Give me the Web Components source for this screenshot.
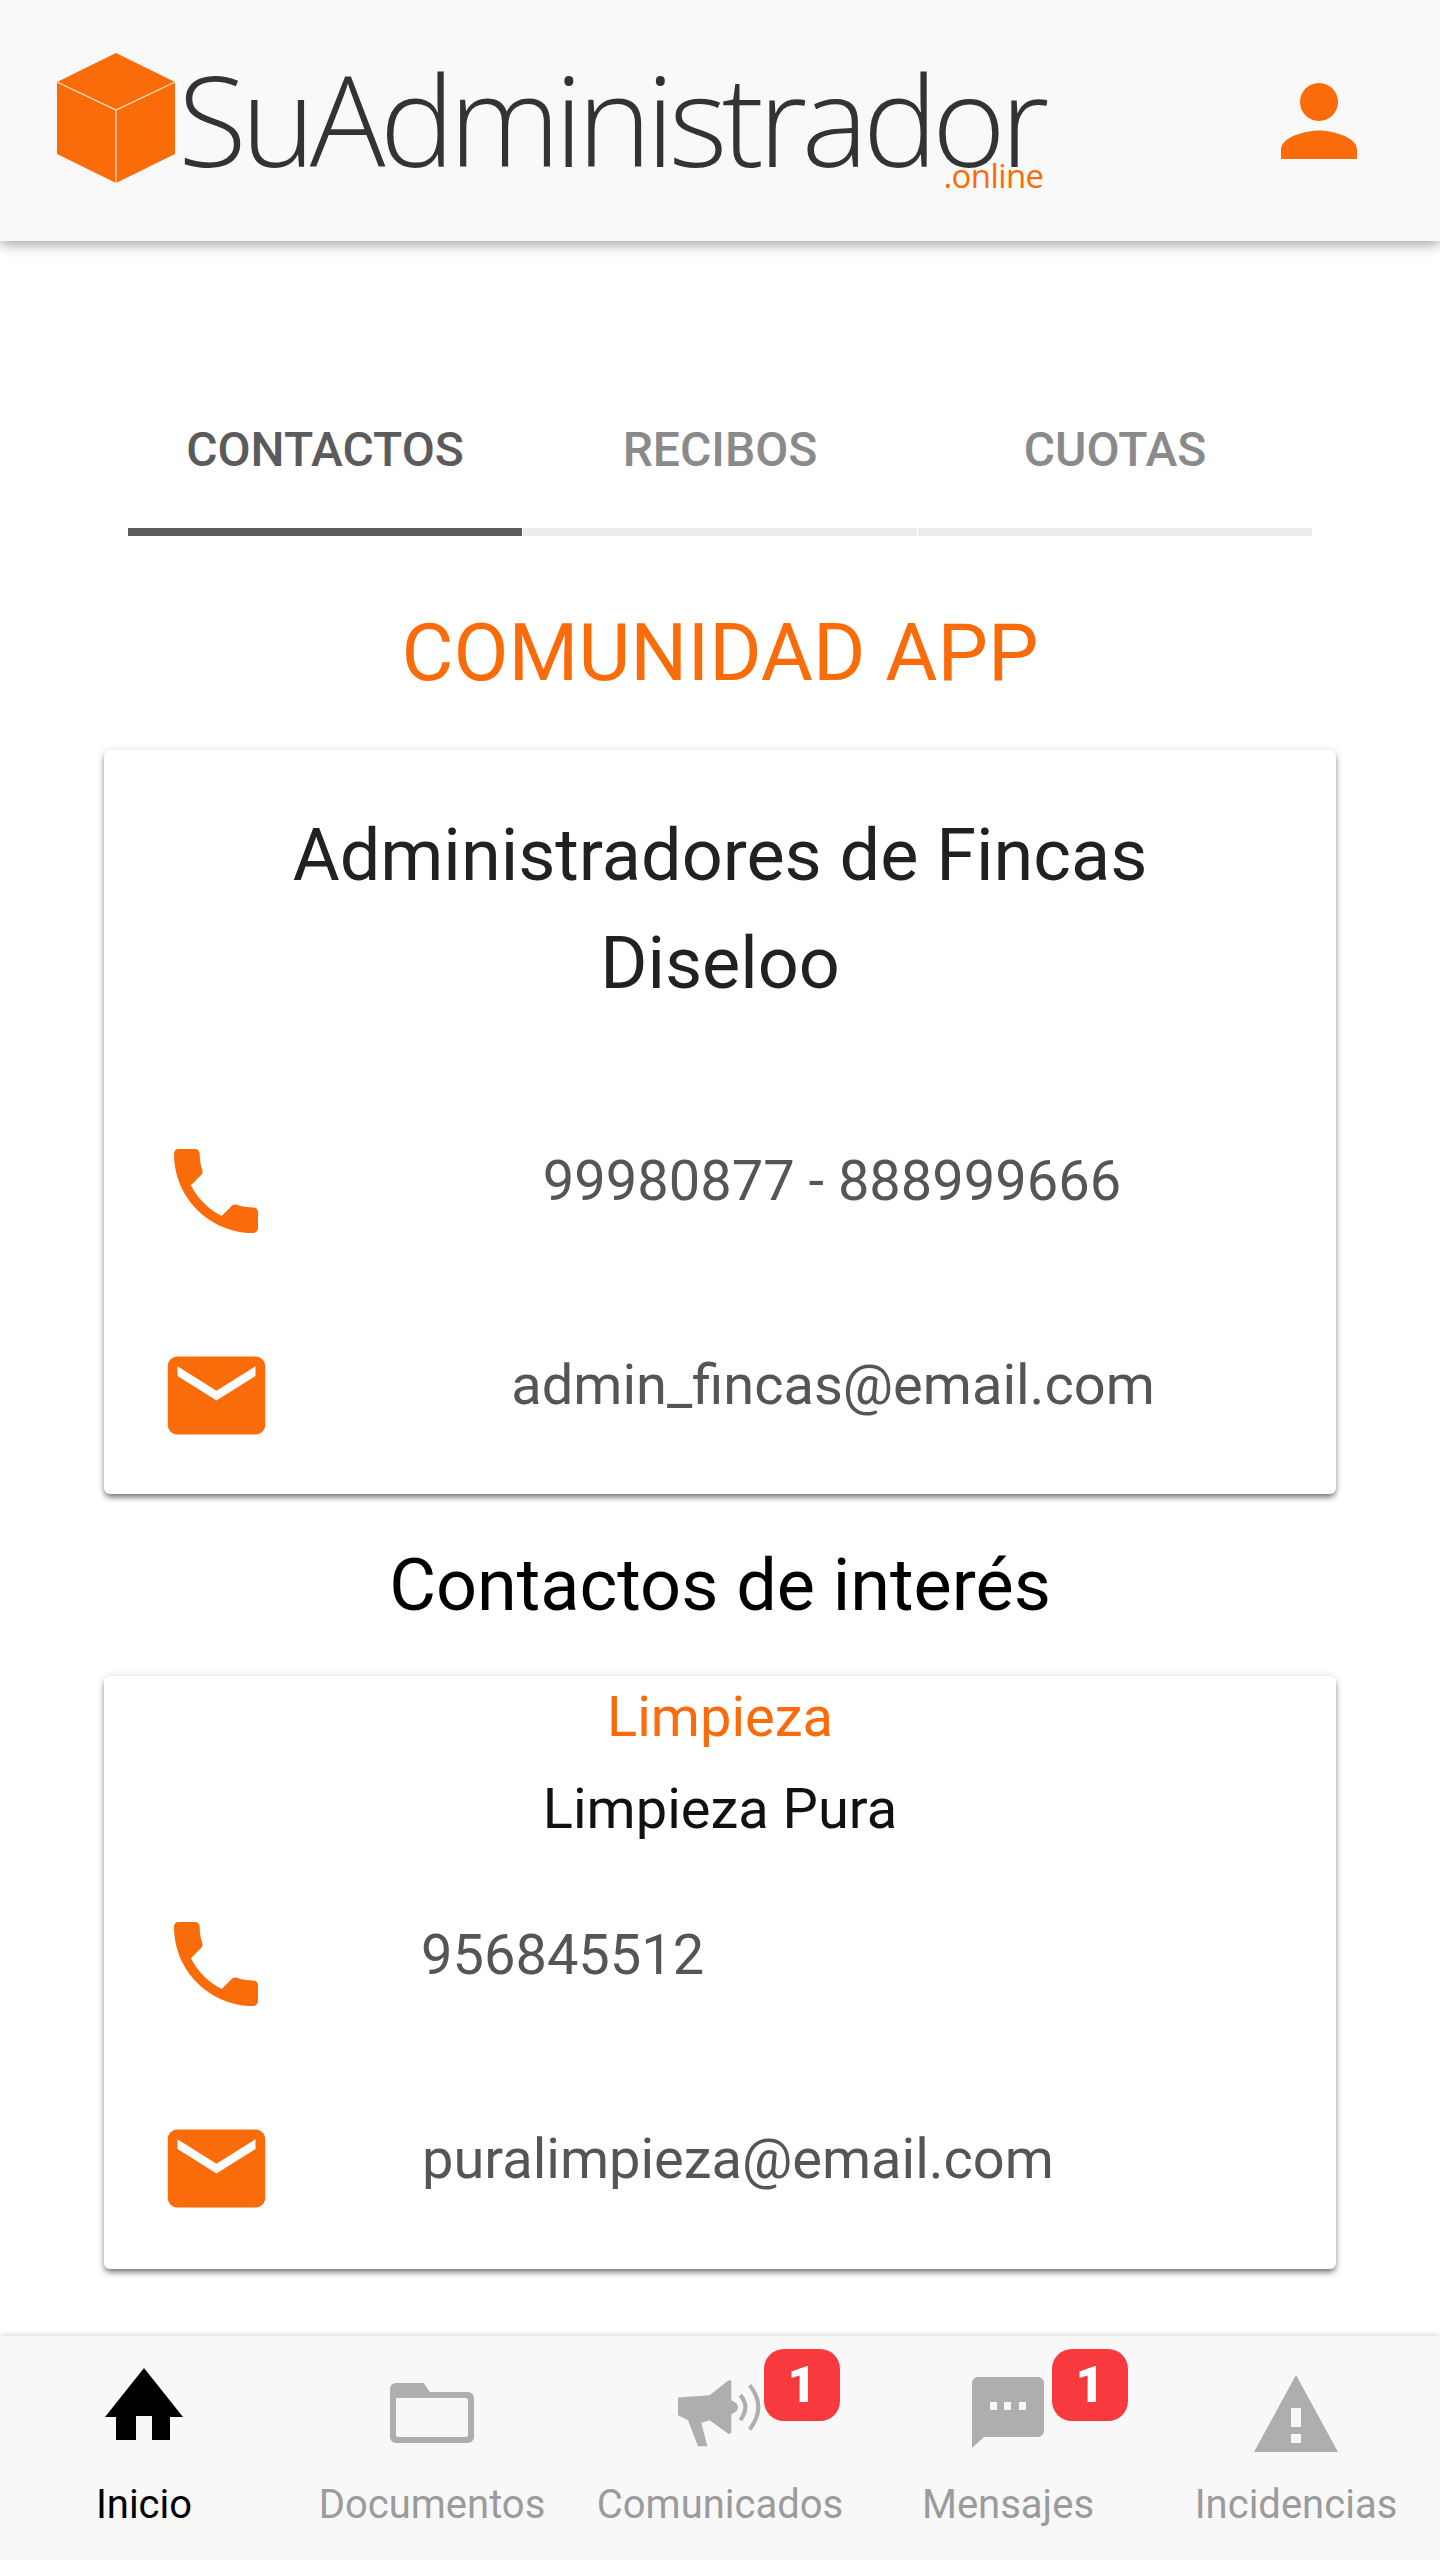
<!DOCTYPE html>
<html lang="es">
<head>
<meta charset="utf-8">
<title>SuAdministrador</title>
<style>
  html, body { margin: 0; padding: 0; background: #fff; }
  body { font-family: Roboto, "Liberation Sans", sans-serif; width: 1440px; height: 2560px; overflow: hidden; }
  app-shell { height: 2560px; }
</style>
</head>
<body>
<app-shell>
  <app-header slot="header"></app-header>
  <tab-bar>
    <tab-item active>CONTACTOS</tab-item>
    <tab-item>RECIBOS</tab-item>
    <tab-item>CUOTAS</tab-item>
  </tab-bar>
  <page-title>COMUNIDAD APP</page-title>
  <contact-card style="height:744px">
    <card-heading>Administradores de Fincas<br>Diseloo</card-heading>
    <contact-row kind="phone" top="71" height="204">99980877 - 888999666</contact-row>
    <contact-row kind="mail" height="204">admin_fincas@email.com</contact-row>
  </contact-card>
  <section-title>Contactos de interés</section-title>
  <contact-card style="height:593px">
    <card-sub>Limpieza</card-sub>
    <card-name>Limpieza Pura</card-name>
    <contact-row kind="phone" top="20" height="204" left>956845512</contact-row>
    <contact-row kind="mail" height="204" left>puralimpieza@email.com</contact-row>
  </contact-card>
  <bottom-nav slot="footer">
    <nav-item icon="home" active>Inicio</nav-item>
    <nav-item icon="folder">Documentos</nav-item>
    <nav-item icon="megaphone" badge="1">Comunicados</nav-item>
    <nav-item icon="message" badge="1">Mensajes</nav-item>
    <nav-item icon="warning">Incidencias</nav-item>
  </bottom-nav>
</app-shell>
<script>
const ORANGE = '#fa6b0a';

function simple(tag, css, html) {
  customElements.define(tag, class extends HTMLElement {
    constructor() {
      super();
      this.attachShadow({ mode: 'open' });
    }
    connectedCallback() {
      this.shadowRoot.innerHTML = `<style>${css}</style>${html}`;
    }
  });
}

simple('app-shell', `
  :host { display: flex; flex-direction: column; position: relative; width: 1440px; }
  .content { flex: 1; min-height: 0; display: flex; flex-direction: column; padding: 0 104px; }
`, `<slot name="header"></slot><div class="content"><slot></slot></div><slot name="footer"></slot>`);

simple('app-header', `
  :host { display: flex; align-items: center; justify-content: space-between; height: 241px; background: #f9f9f9;
    box-shadow: 0 4px 12px rgba(0,0,0,.34); padding: 0 81px 0 56px; box-sizing: border-box; position: relative; z-index: 2; }
  .logo { display: flex; align-items: flex-start; height: 130px; margin-top: -6px; }
  .word { position: relative; font-family: "Open Sans", sans-serif; font-weight: 300; font-size: 126px; line-height: 130px;
    color: #333; letter-spacing: -5.7px; margin-left: 2px; white-space: nowrap; }
  .online { position: absolute; right: 0; bottom: -11px; font-size: 33px; line-height: 36px; letter-spacing: -.6px; font-weight: 400; color: ${ORANGE}; }
  .user { width: 114px; height: 114px; margin-right: -17px; fill: ${ORANGE}; display: block; }
`, `
  <div class="logo">
    <svg width="120" height="130" viewBox="0 0 120 130">
      <path fill="${ORANGE}" d="M60 0 119 29V101L60 130 1 101V29Z"/>
      <path fill="none" stroke="#ffe6c8" stroke-width="1.2" d="M1 29 60 57 119 29M60 57V130"/>
    </svg>
    <div class="word">SuAdministrador<span class="online">.online</span></div>
  </div>
  <svg class="user" viewBox="0 0 24 24"><path d="M12 12c2.21 0 4-1.79 4-4s-1.79-4-4-4-4 1.79-4 4 1.79 4 4 4zm0 2c-2.67 0-8 1.34-8 4v2h16v-2c0-2.66-5.33-4-8-4z"/></svg>
`);

simple('tab-bar', `
  :host { display: flex; margin: 154px 24px 0; height: 141px; gap: 1px; }
`, `<slot></slot>`);

simple('tab-item', `
  :host { flex: 1; display: flex; align-items: center; justify-content: center; box-sizing: border-box; padding-bottom: 24px;
    font-size: 48px; font-weight: 500; color: #8a8a8a; border-bottom: 8px solid #ececec; }
  :host([active]) { color: #5b5b5b; border-bottom-color: #5b5b5b; }
`, `<slot></slot>`);

simple('page-title', `
  :host { display: block; text-align: center; font-size: 80px; line-height: 96px; color: ${ORANGE}; margin-top: 69px; margin-bottom: 49px; }
`, `<slot></slot>`);

simple('contact-card', `
  :host { display: block; background: #fff; border-radius: 6px; box-sizing: border-box; flex: none;
    box-shadow: 0 4px 6px -1px rgba(0,0,0,.55), 0 0 8px rgba(0,0,0,.1); }
`, `<slot></slot>`);

simple('card-heading', `
  :host { display: block; text-align: center; color: #212121; font-size: 72px; line-height: 108px; padding-top: 52px; }
`, `<slot></slot>`);

simple('card-sub', `
  :host { display: block; text-align: center; color: ${ORANGE}; font-size: 56px; line-height: 66px; padding-top: 8px; }
`, `<slot></slot>`);

simple('card-name', `
  :host { display: block; text-align: center; color: #111; font-size: 56px; line-height: 66px; margin-top: 26px; }
`, `<slot></slot>`);

const ROW_ICONS = {
  phone: `<svg width="112" height="112" viewBox="0 0 24 24" fill="${ORANGE}"><path d="M6.62 10.79c1.44 2.83 3.76 5.14 6.59 6.59l2.2-2.2c.27-.27.67-.36 1.02-.24 1.12.37 2.33.57 3.57.57.55 0 1 .45 1 1V20c0 .55-.45 1-1 1-9.39 0-17-7.61-17-17 0-.55.45-1 1-1h3.5c.55 0 1 .45 1 1 0 1.25.2 2.45.57 3.57.11.35.03.74-.25 1.02l-2.2 2.2z"/></svg>`,
  mail: `<svg width="117" height="117" viewBox="0 0 24 24" fill="${ORANGE}"><path d="M20 4H4c-1.1 0-2 .9-2 2v12c0 1.1.9 2 2 2h16c1.1 0 2-.9 2-2V6c0-1.1-.9-2-2-2zm0 4l-8 5-8-5V6l8 5 8-5v2z"/></svg>`
};

customElements.define('contact-row', class extends HTMLElement {
  constructor() {
    super();
    this.attachShadow({ mode: 'open' });
  }
  connectedCallback() {
    const kind = this.getAttribute('kind');
    const top = this.getAttribute('top') || 0;
    this.shadowRoot.innerHTML = `<style>
      :host { display: grid; grid-template-columns: 224px 1fr; align-items: center; height: ${this.getAttribute('height')}px; margin-top: ${top}px; }
      .ic { display: flex; justify-content: center; }
      svg { display: block; }
      .txt { font-size: 56px; color: #555; text-align: center; position: relative; top: -10px; }
      :host([kind="mail"]) .txt { left: 1px; }
      :host([left]) .txt { text-align: left; padding-left: 93px; top: -9px; }
    </style>
    <div class="ic">${ROW_ICONS[kind]}</div>
    <div class="txt"><slot></slot></div>`;
  }
});

simple('section-title', `
  :host { display: block; text-align: center; color: #000; font-size: 72px; line-height: 108px; margin: 38px 0 36px; flex: none; }
`, `<slot></slot>`);

simple('bottom-nav', `
  :host { display: grid; grid-template-columns: repeat(5, 1fr); height: 224px; background: #f8f8f8; box-shadow: 0 -1px 6px rgba(0,0,0,.16); position: absolute; left: 0; right: 0; bottom: 0; }
`, `<slot></slot>`);

const NAV_ICONS = {
  home: `<svg width="78" height="72" viewBox="0 0 78 72"><path fill="currentColor" d="M39 0 78 49H65V72H47V48H31V72H11V49H0Z"/></svg>`,
  folder: `<svg width="84" height="60" viewBox="0 0 84 60"><path fill="currentColor" fill-rule="evenodd" d="M6 0H32a3 3 0 0 1 3 2L40 9H78a6 6 0 0 1 6 6V54a6 6 0 0 1-6 6H6a6 6 0 0 1-6-6V6A6 6 0 0 1 6 0ZM6 15V52a2 2 0 0 0 2 2H76a2 2 0 0 0 2-2V17a2 2 0 0 0-2-2Z"/></svg>`,
  // traced from the reference at 3x, hence the viewBox
  megaphone: `<svg width="84" height="67" viewBox="55 120 252 200"><path fill="currentColor" d="M55 172 150 165 205 122Q210 119 215 122V180Q235 188 235 201 235 214 215 222V278Q210 283 205 280L150 240 125 248 143 318H115L85 240 55 225Z"/><g fill="none" stroke="currentColor" stroke-width="12"><path d="M242 165Q272 200 242 240"/><path d="M270 135Q322 200 270 268"/></g></svg>`,
  message: `<svg width="72" height="71" viewBox="0 0 72 71"><path fill="currentColor" fill-rule="evenodd" d="M6 0H66a6 6 0 0 1 6 6V54a6 6 0 0 1-6 6H12L0 71V6A6 6 0 0 1 6 0ZM18 25V33H25V25ZM32 25V33H39V25ZM47 25V33H54V25Z"/></svg>`,
  warning: `<svg width="84" height="77" viewBox="0 0 84 77"><path fill="currentColor" fill-rule="evenodd" d="M42 0 84 77H0ZM37 33V52H47V33ZM37 59V68H47V59Z"/></svg>`
};

const NAV_POS = {
  home: { top: 32 }, folder: { top: 47 }, megaphone: { top: 44 },
  message: { top: 41 }, warning: { top: 39 }
};

customElements.define('nav-item', class extends HTMLElement {
  constructor() {
    super();
    this.attachShadow({ mode: 'open' });
  }
  connectedCallback() {
    const icon = this.getAttribute('icon');
    const badge = this.getAttribute('badge');
    const p = NAV_POS[icon];
    this.shadowRoot.innerHTML = `<style>
      :host { display: flex; flex-direction: column; align-items: center; position: relative; color: #9b9b9b; --ic: #aeaeae; }
      :host([active]) { color: #000; --ic: #000; }
      .ic { height: 138px; width: 100%; display: flex; justify-content: center; align-items: flex-start; padding-top: ${p.top}px; box-sizing: border-box; color: var(--ic); }
      svg { display: block; }
      .lbl { font-size: 40px; line-height: 48px; white-space: nowrap; margin-top: 7px; }
      .badge { position: absolute; top: 13px; left: 188px; width: 76px; height: 72px; border-radius: 20px; background: #f83a3e; color: #fff;
        font-size: 50px; font-weight: 900; display: flex; align-items: center; justify-content: center; }
    </style>
    <div class="ic">${NAV_ICONS[icon]}</div>
    <div class="lbl"><slot></slot></div>
    ${badge ? `<div class="badge">${badge}</div>` : ''}`;
  }
});
</script>
</body>
</html>
